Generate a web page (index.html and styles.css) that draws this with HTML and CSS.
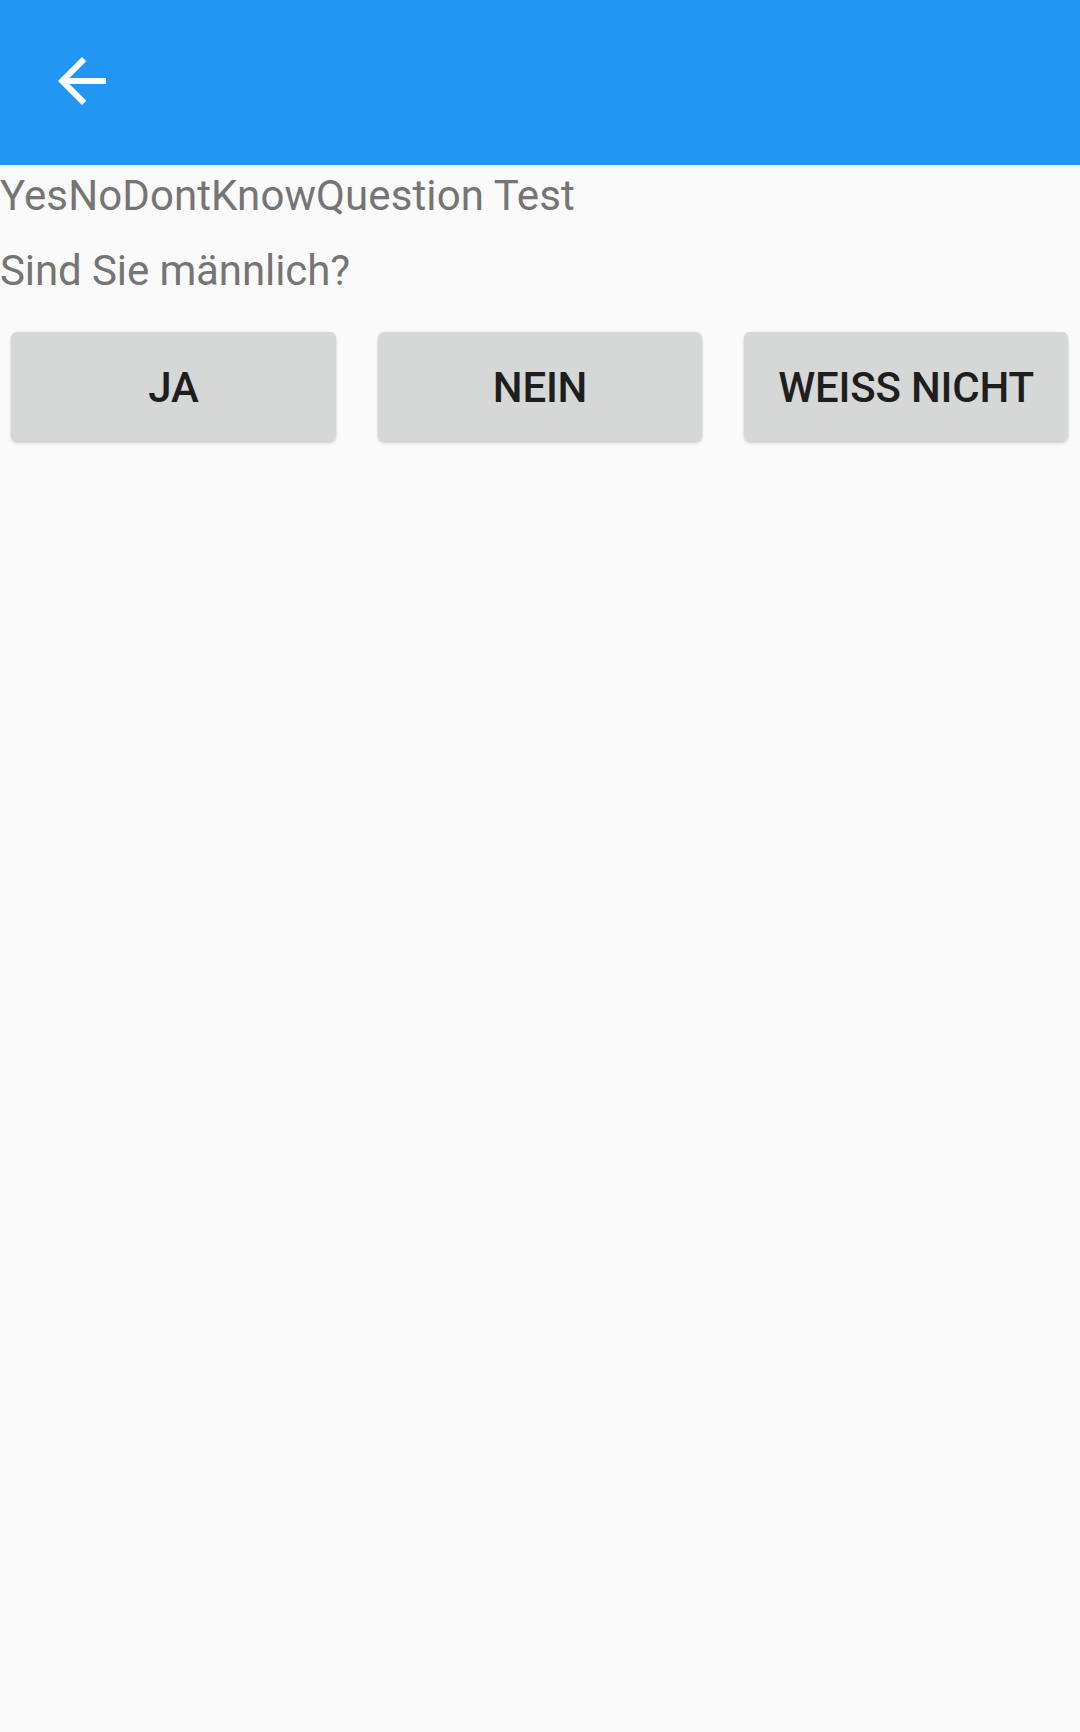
FILE: index.html
```html
<!DOCTYPE html>
<html lang="de">
<head>
<meta charset="utf-8">
<title>YesNoDontKnowQuestion Test</title>
<link rel="stylesheet" href="styles.css">
</head>
<body>
<header class="toolbar">
  <button class="nav-btn" aria-label="Zurück">
    <svg class="nav-icon" viewBox="0 0 24 24" width="72" height="72"><path fill="#fff" d="M20 11H7.83l5.59-5.59L12 4l-8 8 8 8 1.41-1.41L7.83 13H20v-2z"/></svg>
  </button>
</header>
<main class="content">
  <p class="title">YesNoDontKnowQuestion Test</p>
  <p class="question">Sind Sie männlich?</p>
  <div class="answers">
    <button class="answer">JA</button>
    <button class="answer">NEIN</button>
    <button class="answer">WEISS NICHT</button>
  </div>
</main>
</body>
</html>
```
FILE: styles.css
```css
html, body {
  margin: 0;
  padding: 0;
  background: #fafafa;
  font-family: Roboto, "Noto Sans", sans-serif;
}
body {
  width: 1080px;
  min-height: 1732px;
}
.toolbar {
  height: 165px;
  background: #2196f3;
  display: flex;
  align-items: center;
  padding-left: 46px;
  box-sizing: border-box;
}
.nav-btn {
  width: 72px;
  height: 72px;
  padding: 0;
  border: 0;
  background: transparent;
  display: flex;
  margin-top: -3px;
}
.nav-icon {
  display: block;
}
.content {
  display: flex;
  flex-direction: column;
}
.title, .question {
  margin: 0;
  font-size: 42px;
  line-height: 49px;
  color: #757575;
  font-weight: 400;
}
.title {
  margin-top: 6px;
  letter-spacing: 0.1px;
}
.question {
  margin-top: 26px;
  letter-spacing: -0.1px;
}
.answers {
  display: grid;
  grid-template-columns: 325px 324px 324px;
  column-gap: 42px;
  padding-left: 11px;
  margin-top: 37px;
}
.answer {
  height: 109px;
  border: 0;
  border-radius: 6px;
  background: #d6d7d7;
  box-shadow: 0 2px 3px rgba(0,0,0,0.18), 0 0 2px rgba(0,0,0,0.06);
  font-family: Roboto, "Noto Sans", sans-serif;
  font-weight: 500;
  font-size: 42px;
  color: #1e1e1e;
  padding: 0;
  padding-top: 2px;
  letter-spacing: -0.2px;
}
```
